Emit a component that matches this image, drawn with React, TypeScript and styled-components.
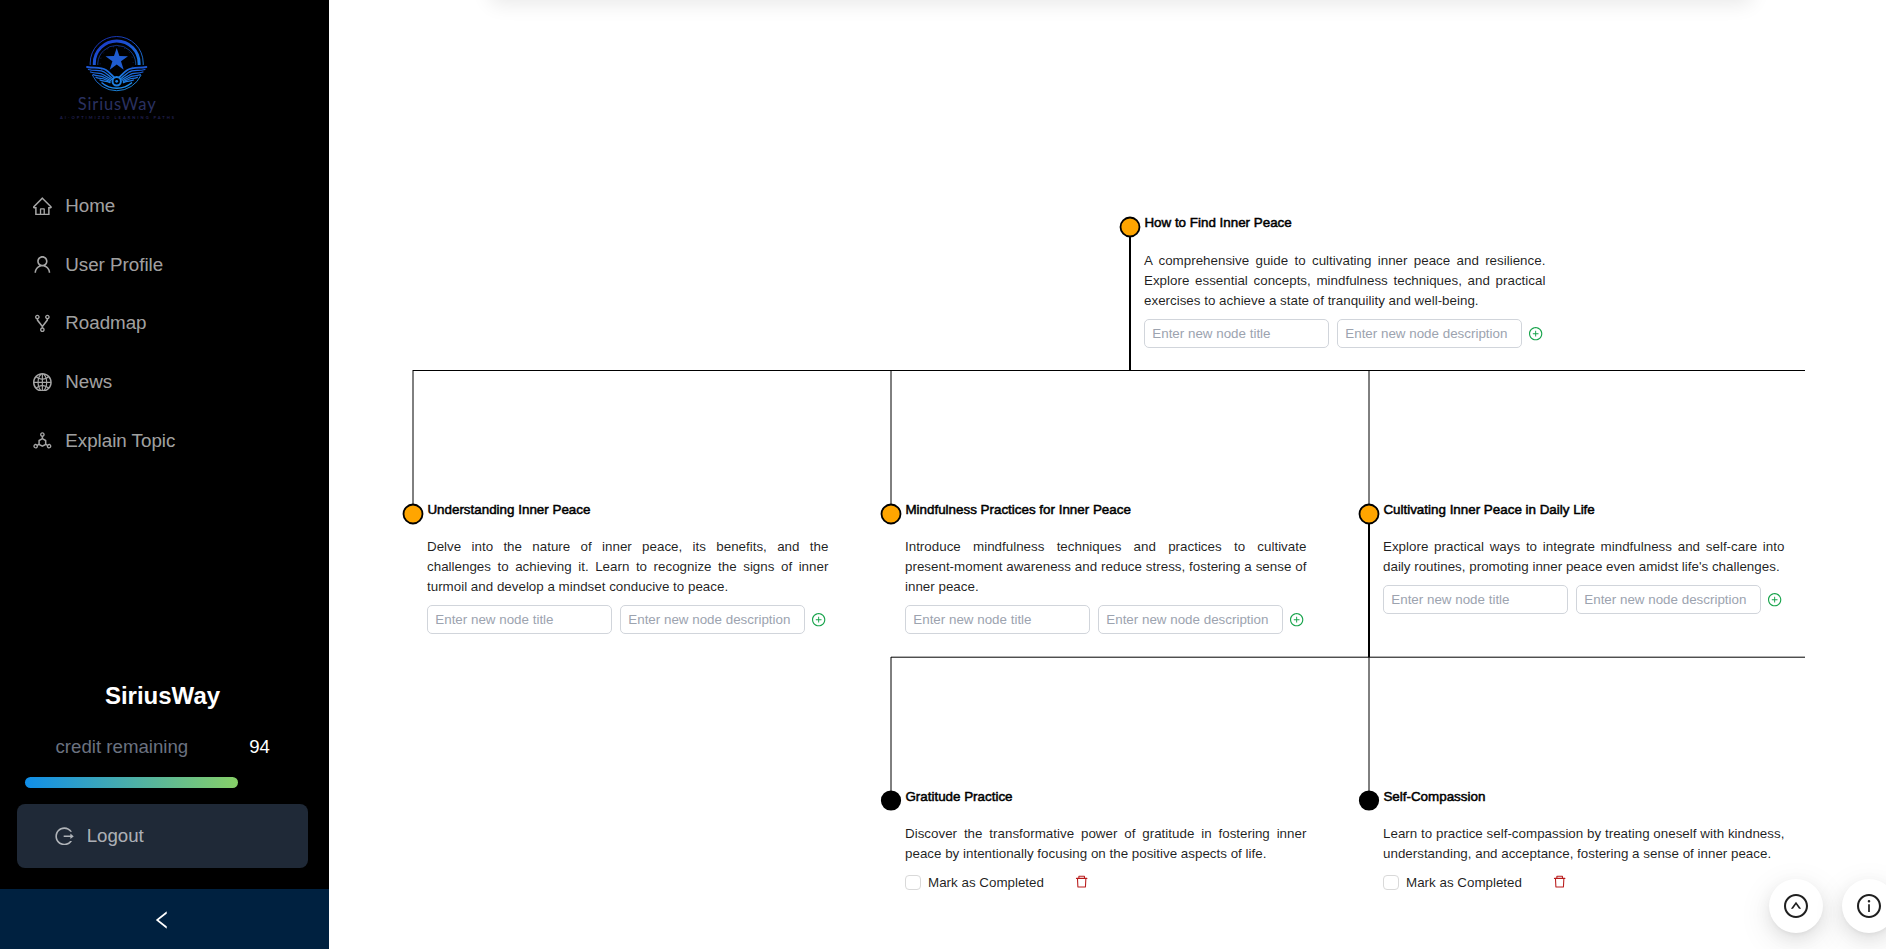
import React from 'react';
import styled, { createGlobalStyle } from 'styled-components';
import {
  AiOutlineHome, AiOutlineUser, AiOutlineFork, AiOutlineGlobal, AiOutlineDeploymentUnit,
  AiOutlineLogout, AiOutlineLeft, AiOutlinePlusCircle, AiOutlineDelete, AiOutlineUpCircle, AiOutlineInfoCircle,
} from 'react-icons/ai';

// Trims the empty margin that the icon set keeps round its glyphs.
const GLYPH_BOX = '64 64 896 896';

const Global = createGlobalStyle`
  *, *::before, *::after { box-sizing: border-box; }
  html, body { margin: 0; overflow: hidden; }
  body { font-family: "Liberation Sans", Arial, sans-serif; background: #fff; color: rgba(0, 0, 0, 0.88); }
  svg { display: block; flex: none; }
`;

const Layout = styled.div`display: flex; width: 100%; height: 949px; overflow: hidden;`;

const Sidebar = styled.aside`
  display: flex; flex-direction: column; flex: none; width: 329px; background: #000;
`;
const LogoArea = styled.div`height: 182px; padding: 32px 0 0 56px; flex: none;`;
const Menu = styled.nav`display: flex; flex-direction: column; gap: 10.7px; padding-left: 33px;`;
const MenuItem = styled.a`
  display: flex; align-items: center; gap: 13.5px; height: 48px;
  font-size: 18.75px; color: rgba(255, 255, 255, 0.65);
  svg { width: 18.75px; height: 18.75px; }
`;
const Account = styled.section`
  margin-top: auto; display: flex; flex-direction: column; padding: 0 21px 21px 17px;
`;
const AccountName = styled.h2`
  margin: 0; text-align: center; width: 291px; font-size: 24px; line-height: 32px; color: #fff;
`;
const CreditRow = styled.div`
  display: flex; justify-content: space-between; padding: 0 38px 0 38.5px; margin-top: 20px;
  font-size: 18.67px; line-height: 30px; color: #6b7280;
`;
const CreditValue = styled.span`color: #fff;`;
const CreditBar = styled.div`
  width: 213px; height: 11px; border-radius: 6px; margin: 15px 0 0 8px;
  background: linear-gradient(to right, #108ee9, #87d068);
`;
const Logout = styled.button`
  display: flex; align-items: center; gap: 13px; width: 291px; height: 64px; margin-top: 16px; padding: 0 0 0 38px;
  border: 0; border-radius: 8px; background: #1f2937; color: rgba(255, 255, 255, 0.65); font: 18.67px "Liberation Sans", sans-serif;
  svg { width: 18.67px; height: 18.67px; }
`;
const Collapse = styled.div`
  display: flex; align-items: center; justify-content: center; height: 60px; padding: 2px 5px 0 0; background: #002140; color: #fff;
  svg { width: 20px; height: 20px; }
`;

const Canvas = styled.main`position: relative; flex: 1; overflow: hidden; background: #fff;`;
const TopCard = styled.div`
  width: 1262px; height: 40px; margin: -40px 0 0 161px; border-radius: 8px;
  box-shadow: 0 4px 20px rgba(0, 0, 0, 0.09);
`;
const Edges = styled.svg`position: absolute; left: 0; top: 0;`;
const Node = styled.article<{ $x: number; $y: number }>`
  position: absolute; left: ${p => p.$x - 329}px; top: ${p => p.$y}px; width: 401.4px;
`;
const NodeTitle = styled.h3`
  margin: 0; padding-left: 0.4px; font-size: 13.4px; line-height: 18px; font-weight: 400; color: #000; -webkit-text-stroke: 0.5px #000;
`;
const NodeText = styled.p<{ $gap?: number }>`
  margin: ${p => p.$gap ?? 18}px 0 0; font-size: 13.38px; line-height: 20px; text-align: justify;
`;
const AddRow = styled.form`display: flex; align-items: center; gap: 8px; margin-top: 8px;`;
const Field = styled.input`
  width: 185px; height: 29.3px; padding: 0 7.3px; border: 1px solid #d1d5db; border-radius: 5px; outline: 0; background: #fff;
  font: 13.38px "Liberation Sans", sans-serif;
  &::placeholder { color: #9ca3af; opacity: 1; }
`;
const AddIcon = styled(AiOutlinePlusCircle)`width: 13.33px; height: 13.33px; margin: 1px 0 0 -0.7px; color: #16a34a;`;
const DoneRow = styled.div`display: flex; align-items: center; margin-top: 8px; height: 20px; font-size: 13.38px;`;
const CheckBox = styled.span`width: 16px; height: 15px; margin-right: 7px; border: 1px solid #d9d9d9; border-radius: 4px;`;
const DeleteIcon = styled(AiOutlineDelete)`width: 13.33px; height: 13.33px; margin-left: 31px; color: #b91c1c;`;
const FloatButton = styled.button<{ $x: number }>`
  position: absolute; left: ${p => p.$x - 329}px; top: 879px; width: 54px; height: 54px; padding: 0; border: 0; border-radius: 50%;
  display: grid; place-items: center; background: #fff; color: rgba(0, 0, 0, 0.88);
  box-shadow: 0 6px 16px 0 rgba(0, 0, 0, 0.08), 0 3px 6px -4px rgba(0, 0, 0, 0.12), 0 9px 28px 8px rgba(0, 0, 0, 0.05);
  svg { width: 24px; height: 24px; }
`;

const menu = [
  { icon: AiOutlineHome, label: 'Home' },
  { icon: AiOutlineUser, label: 'User Profile' },
  { icon: AiOutlineFork, label: 'Roadmap' },
  { icon: AiOutlineGlobal, label: 'News' },
  { icon: AiOutlineDeploymentUnit, label: 'Explain Topic' },
];

interface RoadmapNode { x: number; y: number; gap?: number; title: string; text: string; open: boolean }

const nodes: RoadmapNode[] = [
  { x: 1144, y: 214, gap: 19, title: 'How to Find Inner Peace', text: 'A comprehensive guide to cultivating inner peace and resilience. Explore essential concepts, mindfulness techniques, and practical exercises to achieve a state of tranquility and well-being.', open: true },
  { x: 427, y: 501, title: 'Understanding Inner Peace', text: 'Delve into the nature of inner peace, its benefits, and the challenges to achieving it. Learn to recognize the signs of inner turmoil and develop a mindset conducive to peace.', open: true },
  { x: 905, y: 501, title: 'Mindfulness Practices for Inner Peace', text: 'Introduce mindfulness techniques and practices to cultivate present-moment awareness and reduce stress, fostering a sense of inner peace.', open: true },
  { x: 1383, y: 501, title: 'Cultivating Inner Peace in Daily Life', text: "Explore practical ways to integrate mindfulness and self-care into daily routines, promoting inner peace even amidst life's challenges.", open: true },
  { x: 905, y: 788, title: 'Gratitude Practice', text: 'Discover the transformative power of gratitude in fostering inner peace by intentionally focusing on the positive aspects of life.', open: false },
  { x: 1383, y: 788, title: 'Self-Compassion', text: 'Learn to practice self-compassion by treating oneself with kindness, understanding, and acceptance, fostering a sense of inner peace.', open: false },
];

function Wing() {
  return (
    <g fill="none" stroke="url(#brand)" strokeWidth="1.3" strokeLinecap="round">
      <path d="M31 35 C38 36.500 44 34.500 50 38 C54 40.500 56 43.500 59 46" strokeWidth="1.8" />
      <path d="M32.500 37.500 C39 39.500 44 37 49 40.500 C52 42.500 54 44.500 56.500 46.500" />
      <path d="M34.500 40 C40 42.200 44 40 48 43 L55.500 47.500" />
      <path d="M37 42.700 C42 44.700 45 42.800 48 45.300 L54.500 48.500" />
      <path d="M40 45.300 C44 47.200 46 45.600 49 47.500 L54 49.500" />
      <path d="M44 48 C47 49.600 50 48.600 54 50.600" />
    </g>
  );
}

function Logo() {
  return (
    <svg width="122" height="92" viewBox="0 0 122 92">
      <defs>
        <linearGradient id="brand" gradientUnits="userSpaceOnUse" x1="40" y1="5" x2="66" y2="52">
          <stop offset="0" stopColor="#1b2fc4" /><stop offset="1" stopColor="#1d8cea" />
        </linearGradient>
      </defs>
      <g fill="none" stroke="url(#brand)">
        <path d="M34.200 33 V31 A26.500 26.500 0 0 1 87.200 31 V33" strokeWidth="0.9" />
        <path d="M38.300 33 V31.400 A22.400 22.400 0 0 1 83.100 31.400 V33" strokeWidth="3" />
        <path d="M41.800 33 V31 A19 19 0 0 1 79.700 31 V33" strokeWidth="0.6" />
        <circle cx="60.700" cy="31" r="16.500" strokeWidth="0.8" strokeDasharray="0.8 5" strokeDashoffset="2" opacity="0.6" />
        <path d="M36.300 43 A26.800 26.800 0 0 0 85.100 43" strokeWidth="0.9" />
        <path d="M45.500 50.500 A23 23 0 0 0 76 50.500" strokeWidth="1.4" />
      </g>
      <path d="M60.700 16 L63.400 24 L72 24.200 L65 29.200 L67.700 37.700 L60.700 32.500 L53.700 37.700 L56.400 29.200 L49.500 24.200 L58 24 Z" fill="#1f5cd0" />
      <Wing />
      <g transform="translate(121.400 0) scale(-1 1)"><Wing /></g>
      <circle cx="60.700" cy="49.300" r="4.200" fill="#000" stroke="#1d80e2" strokeWidth="2" />
      <circle cx="60.700" cy="49.300" r="1.400" fill="#1d80e2" />
      <text x="60.700" y="78" textAnchor="middle" textLength="78" fontFamily="Lato, sans-serif" fontSize="16.500" fill="#2a3160">SiriusWay</text>
      <text x="61" y="87" textAnchor="middle" textLength="114" fontFamily="Lato, sans-serif" fontSize="4" fontWeight="700" fill="#232255">AI-OPTIMIZED LEARNING PATHS</text>
    </svg>
  );
}

export default function App() {
  return (
    <Layout>
      <Global />
      <Sidebar>
        <LogoArea><Logo /></LogoArea>
        <Menu>
          {menu.map(({ icon: Icon, label }) => <MenuItem key={label}><Icon viewBox={GLYPH_BOX} />{label}</MenuItem>)}
        </Menu>
        <Account>
          <AccountName>SiriusWay</AccountName>
          <CreditRow><span>credit remaining</span><CreditValue>94</CreditValue></CreditRow>
          <CreditBar />
          <Logout><AiOutlineLogout viewBox={GLYPH_BOX} />Logout</Logout>
        </Account>
        <Collapse><AiOutlineLeft viewBox={GLYPH_BOX} /></Collapse>
      </Sidebar>
      <Canvas>
        <TopCard />
        <Edges width="1557" height="949" viewBox="329 0 1557 949" fill="none" stroke="#000">
          <g strokeWidth="1">
            <path d="M413 370.500 H1805 M891 657.200 H1805" />
            <path d="M413 370 V514 M891 370 V514 M1369 370 V514 M891 657 V800 M1369 657 V800" />
          </g>
          <path d="M1130 227 V370 M1369 514 V657" strokeWidth="2" />
          <g strokeWidth="1.800">
            <circle cx="1130" cy="227" r="9.500" fill="orange" />
            <circle cx="413" cy="514" r="9.500" fill="orange" />
            <circle cx="891" cy="514" r="9.500" fill="orange" />
            <circle cx="1369" cy="514" r="9.500" fill="orange" />
            <circle cx="891" cy="800.500" r="9.200" fill="#000" />
            <circle cx="1369" cy="800.500" r="9.200" fill="#000" />
          </g>
        </Edges>
        {nodes.map(n => (
          <Node key={n.title} $x={n.x} $y={n.y}>
            <NodeTitle>{n.title}</NodeTitle>
            <NodeText $gap={n.gap}>{n.text}</NodeText>
            {n.open ? (
              <AddRow>
                <Field placeholder="Enter new node title" />
                <Field placeholder="Enter new node description" />
                <AddIcon viewBox={GLYPH_BOX} />
              </AddRow>
            ) : (
              <DoneRow><CheckBox />Mark as Completed<DeleteIcon viewBox={GLYPH_BOX} /></DoneRow>
            )}
          </Node>
        ))}
        <FloatButton $x={1769}><AiOutlineUpCircle viewBox={GLYPH_BOX} /></FloatButton>
        <FloatButton $x={1842}><AiOutlineInfoCircle viewBox={GLYPH_BOX} /></FloatButton>
      </Canvas>
    </Layout>
  );
}
